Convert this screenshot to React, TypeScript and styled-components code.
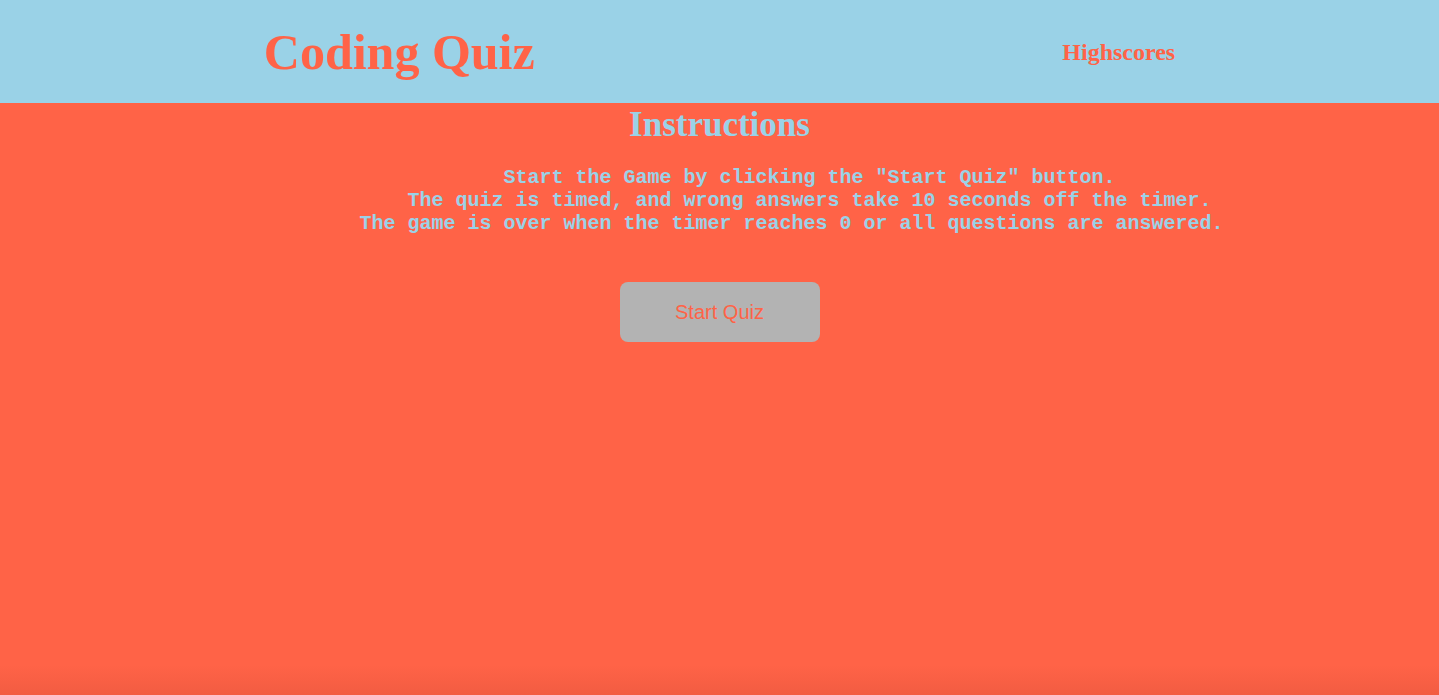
import React from "react";
import styled, { createGlobalStyle } from "styled-components";

const Global = createGlobalStyle`
  html, body {
    margin: 0;
    padding: 0;
    height: 100%;
    background: #ff6347;
  }
  #root {
    min-height: 100%;
    display: flex;
    flex-direction: column;
  }
`;

const BLUE = "#9ad2e7";
const TOMATO = "#ff6347";

const Page = styled.div`
  flex: 1;
  display: flex;
  flex-direction: column;
  min-height: 695px;
  background: ${TOMATO};
`;

const Header = styled.header`
  height: 103px;
  background: ${BLUE};
  display: flex;
  justify-content: space-around;
  align-items: center;
  font-family: "Liberation Serif", "Times New Roman", serif;
  color: ${TOMATO};
`;

const Title = styled.h1`
  margin: 0;
  font-size: 50px;
  font-weight: bold;
`;

const NavLink = styled.a`
  font-size: 24px;
  font-weight: bold;
  color: ${TOMATO};
  text-decoration: none;
  cursor: pointer;
  margin-top: 1px;
`;

const Main = styled.main`
  flex: 1;
  display: flex;
  flex-direction: column;
  align-items: center;
  background: linear-gradient(
    to bottom,
    ${TOMATO} 0,
    ${TOMATO} calc(100% - 30px),
    #f25c42 100%
  );
`;

const Heading = styled.h2`
  margin: 2px 0 0;
  font-family: "Liberation Serif", "Times New Roman", serif;
  font-size: 35px;
  font-weight: bold;
  color: ${BLUE};
`;

const Instructions = styled.div`
  align-self: stretch;
  margin: 21px 0 0;
  padding-left: 180px;
  font-family: "Liberation Mono", "Courier New", monospace;
  font-weight: bold;
  font-size: 20px;
  color: ${BLUE};
  text-align: center;
`;

const Line = styled.div<{ $padRight?: number }>`
  white-space: nowrap;
  padding-right: ${(p) => p.$padRight ?? 0}px;
`;

const StartButton = styled.button`
  margin-top: 47px;
  width: 200px;
  height: 60px;
  border: none;
  border-radius: 8px;
  background: #b3b3b3;
  color: ${TOMATO};
  font-family: "Liberation Sans", Arial, sans-serif;
  font-size: 20px;
  cursor: pointer;
`;

export default function App() {
  return (
    <>
      <Global />
      <Page>
        <Header>
          <Title>Coding Quiz</Title>
          <NavLink>Highscores</NavLink>
        </Header>
        <Main>
          <Heading>Instructions</Heading>
          <Instructions>
            <Line>Start the Game by clicking the "Start Quiz" button.</Line>
            <Line>The quiz is timed, and wrong answers take 10 seconds off the timer.</Line>
            <Line $padRight={36}>
              The game is over when the timer reaches 0 or all questions are answered.
            </Line>
          </Instructions>
          <StartButton>Start Quiz</StartButton>
        </Main>
      </Page>
    </>
  );
}
